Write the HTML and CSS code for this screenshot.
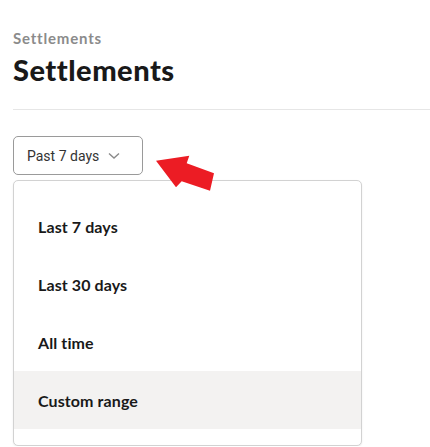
FILE: index.html
```html
<!DOCTYPE html>
<html>
<head>
<meta charset="utf-8">
<link rel="stylesheet" href="styles.css">
</head>
<body>
<div class="page">
  <div class="crumb">Settlements</div>
  <h1 class="title">Settlements</h1>
  <div class="divider"></div>
  <div class="filter">
    <button class="select">
      <span>Past 7 days</span>
      <svg class="chev" width="12" height="8" viewBox="0 0 12 8"><path d="M1 1.5 L6 6 L11 1.5" fill="none" stroke="#8a8a8a" stroke-width="1.4"/></svg>
    </button>
    <ul class="menu">
      <li class="item">Last 7 days</li>
      <li class="item">Last 30 days</li>
      <li class="item">All time</li>
      <li class="item active">Custom range</li>
    </ul>
    <svg class="arrow" width="70" height="45" viewBox="0 0 70 45"><polygon points="6,11.7 39.3,6.7 36.7,14.3 64,24.3 60,41.7 31.7,32.3 26,38.3" fill="#ec1c24"/></svg>
  </div>
</div>
</body>
</html>
```
FILE: styles.css
```css
* { box-sizing: border-box; }
html, body { margin: 0; padding: 0; background: #fff; }
body { font-family: Lato, "Noto Sans", sans-serif; color: #191919; }
.page { padding: 28px 0 0 13px; }
.crumb { font-size: 15px; line-height: 20px; font-weight: 700; color: #8b8b8b; letter-spacing: 0.8px; }
.title { margin: 4px 0 0; font-size: 29px; line-height: 36px; font-weight: 900; color: #191919; letter-spacing: 0.5px; }
.divider { margin-top: 21px; height: 1px; background: #e6e6e6; }
.filter { position: relative; margin-top: 26px; }
.select {
  display: flex; align-items: center; gap: 9px;
  width: 130px; height: 39px; padding: 0 0 0 13px;
  border: 1px solid #9a9a9a; border-radius: 5px; background: #fff;
  font-family: Roboto, "Liberation Sans", sans-serif; font-size: 14px; color: #333;
}
.chev { margin-top: 1px; }
.menu {
  list-style: none; margin: 5px 0 0; padding: 16px 0;
  width: 349px; border: 1px solid #d2d2d2; border-radius: 5px; background: #fff;
  box-shadow: 0 1px 2px rgba(0,0,0,0.08);
}
.item { height: 58px; display: flex; align-items: center; padding-left: 24px; font-size: 16px; font-weight: 700; color: #191919; letter-spacing: 0.1px; }
.item.active { background: #f3f2f1; }
.arrow { position: absolute; left: 137px; top: 13px; }
```
